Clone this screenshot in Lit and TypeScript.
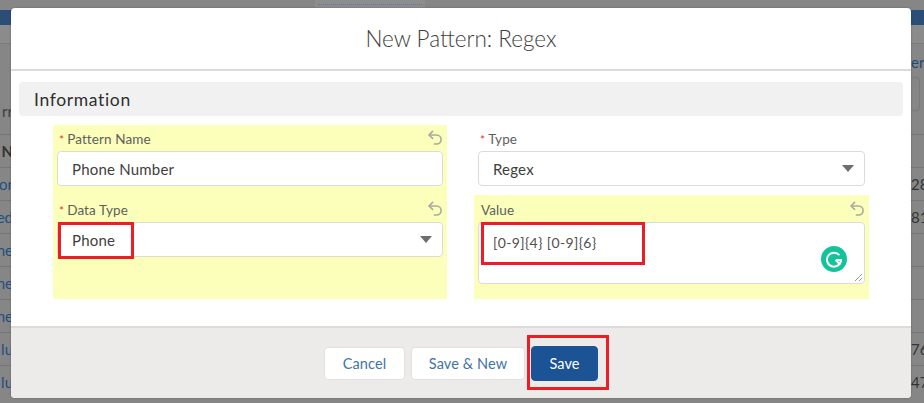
import { LitElement, html, css, svg } from "lit";
import { customElement } from "lit/decorators.js";

const undo = html`<svg class="undo" viewBox="0 0 16 16" width="16" height="16" fill="none" stroke="#a9a9a2" stroke-width="1.6" stroke-linecap="round" stroke-linejoin="round"><path d="M5.6 1.4 2 5l3.6 3.4"/><path d="M2.4 5H9.6a4.2 4.2 0 0 1 0 9H7.4"/></svg>`;
const caret = svg`<svg class="caret" viewBox="0 0 12 7" width="12" height="7"><path d="M0 0h12L6 7z" fill="#706e6b"/></svg>`;

const leftRows = ["N", "or", "ed", "ne", "ne", "ne", "lu", "lu"];
const rightRows = ["", "28", "81", "", "", "", "76", "47"];

@customElement("app-root")
export class AppRoot extends LitElement {
  static styles = css`
    :host { display: block; width: 924px; height: 403px; position: relative; overflow: hidden; background: #868686; font-family: "Lato", "Open Sans", sans-serif; color: #3e3e3c; }
    .page { display: flex; justify-content: space-between; height: 403px; }
    .strip { width: 13px; display: flex; flex-direction: column; overflow: hidden; font-size: 15px; }
    .band { height: 15px; margin-top: 10px; background: #2a4e78; flex: none; }
    .sub { height: 19px; flex: none; background: #8b8b8b; border-bottom: 1px solid #7a7a7a; box-sizing: border-box; }
    .head { height: 90px; flex: none; display: flex; align-items: flex-end; justify-content: flex-end; padding-bottom: 14px; box-sizing: border-box; color: #3d3d3d; }
    .strip.right .head { color: #1d4a76; flex-direction: column; justify-content: flex-start; align-items: flex-start; padding: 9px 0 0 0; gap: 2px; }
    .ghost { width: 9px; height: 34px; border: 1px solid #7a7a7a; border-left: 0; border-radius: 0 4px 4px 0; box-sizing: border-box; margin-top: 4px; }
    .row { height: 33px; flex: none; border-top: 1px solid #767676; box-sizing: border-box; display: flex; align-items: center; color: #1f4f80; white-space: nowrap; }
    .strip.left .row { justify-content: flex-end; }
    .strip.left .row:nth-of-type(4) { color: #333; font-weight: 700; }
    .strip.right .row { color: #333; }
    .top { position: absolute; left: 315px; top: 0; width: 110px; height: 8px; background: #8d8d8d; }
    .top i { display: block; height: 0; margin: 4px 3px 0; border-top: 1px dotted #5a7ba4; }

    .modal { position: absolute; left: 11px; top: 8px; width: 900px; height: 390px; background: #fff; border-radius: 4px; overflow: hidden; display: flex; flex-direction: column; box-shadow: 0 0 2px rgba(0,0,0,.3); }
    .title { height: 63px; flex: none; box-sizing: border-box; border-bottom: 2px solid #dddbda; display: flex; align-items: center; justify-content: center; font-size: 22.5px; font-weight: 300; color: #3e3e3c; padding-bottom: 1px; }
    .body { flex: 1; padding: 11px 8px 0; }
    .section { height: 34px; background: #f1f1f1; border-radius: 4px; display: flex; align-items: center; padding-left: 15px; font-size: 17.5px; letter-spacing: .65px; color: #2e2e2e; }
    .cols { display: grid; grid-template-columns: 394px 395px; column-gap: 27px; padding: 9px 0 0 34px; }
    .col { display: flex; flex-direction: column; height: 174px; }
    .yellow { background: #fbffba; }
    .fieldbox { padding: 0 4px; }
    .label { height: 26px; box-sizing: border-box; padding: 2px 0 0 2px; display: flex; align-items: center; font-size: 13.5px; color: #605e5c; letter-spacing: .1px; }
    .label.gap { margin-top: 10px; }
    .label.first { margin-top: 1px; padding-left: 3px; }
    .req { color: #e8353b; margin-right: 3px; font-size: 12px; }
    .undo { margin: -2px 0 0 auto; }
    .control { height: 35px; box-sizing: border-box; background: #fff; border: 1px solid #dddbda; border-radius: 4px; display: flex; align-items: center; justify-content: space-between; padding: 0 10px 0 14px; font-size: 15px; letter-spacing: .2px; color: #3e3e3c; }
    .area { height: 62px; align-items: flex-start; padding-top: 11px; font-size: 14px; letter-spacing: .4px; color: #514f4d; position: relative; }
    .grammarly { position: absolute; right: 17px; top: 23px; }
    .grip { position: absolute; right: 1px; bottom: 1px; }
    .fill { flex: 1; margin-top: 9px; }
    .footer { height: 72px; flex: none; box-sizing: border-box; background: #ecebea; border-top: 2px solid #dddbda; display: flex; align-items: center; justify-content: flex-end; gap: 6px; padding: 0 313px 0 0; }
    .btn { height: 33px; box-sizing: border-box; background: #fff; border: 1px solid #e2e1df; border-radius: 4px; display: flex; align-items: center; justify-content: center; font-size: 14.5px; letter-spacing: .1px; color: #3f74a8; font-family: inherit; }
    .cancel { width: 81px; }
    .savenew { width: 114px; }
    .save { width: 67px; height: 35px; background: #1c5394; border-color: #1c5394; color: #fff; font-size: 14.5px; }

    .mark { position: absolute; box-sizing: border-box; border: 3px solid #ee1c25; pointer-events: none; }
    .m1 { left: 58px; top: 222px; width: 76px; height: 37px; }
    .m2 { left: 481px; top: 222px; width: 164px; height: 43px; }
    .m3 { left: 527px; top: 335px; width: 82px; height: 55px; }
  `;

  render() {
    return html`
      <div class="page">
        <div class="strip left">
          <div class="band"></div>
          <div class="sub"></div>
          <div class="head">rr</div>
          ${leftRows.map((t) => html`<div class="row">${t}</div>`)}
        </div>
        <div class="strip right">
          <div class="band"></div>
          <div class="sub"></div>
          <div class="head"><span>er</span><div class="ghost"></div></div>
          ${rightRows.map((t) => html`<div class="row">${t}</div>`)}
        </div>
      </div>
      <div class="top"><i></i></div>
      <div class="modal">
        <div class="title">New Pattern: Regex</div>
        <div class="body">
          <div class="section">Information</div>
          <div class="cols">
            <div class="col yellow">
              <div class="fieldbox">
                <div class="label"><span class="req">*</span>Pattern Name ${undo}</div>
                <div class="control">Phone Number</div>
              </div>
              <div class="fieldbox">
                <div class="label gap"><span class="req">*</span>Data Type ${undo}</div>
                <div class="control">Phone ${caret}</div>
              </div>
            </div>
            <div class="col">
              <div class="fieldbox">
                <div class="label"><span class="req">*</span>Type</div>
                <div class="control">Regex ${caret}</div>
              </div>
              <div class="fieldbox yellow fill">
                <div class="label first">Value ${undo}</div>
                <div class="control area">
                  [0-9]{4} [0-9]{6}
                  <svg class="grammarly" width="26" height="26" viewBox="0 0 26 26"><circle cx="13" cy="13" r="13" fill="#15c39a"/><path d="M18.4 9.2A7 7 0 1 0 20 14h-5.2" fill="none" stroke="#fff" stroke-width="2"/><path d="M14.6 14l4.6 4.6" stroke="#fff" stroke-width="2"/></svg>
                  <svg class="grip" width="9" height="9" viewBox="0 0 9 9"><path d="M1 8 8 1M5 8l3-3" stroke="#9a9a9a" stroke-width="1"/></svg>
                </div>
              </div>
            </div>
          </div>
        </div>
        <div class="footer">
          <button class="btn cancel">Cancel</button>
          <button class="btn savenew">Save &amp; New</button>
          <button class="btn save">Save</button>
        </div>
      </div>
      <div class="mark m1"></div>
      <div class="mark m2"></div>
      <div class="mark m3"></div>
    `;
  }
}
